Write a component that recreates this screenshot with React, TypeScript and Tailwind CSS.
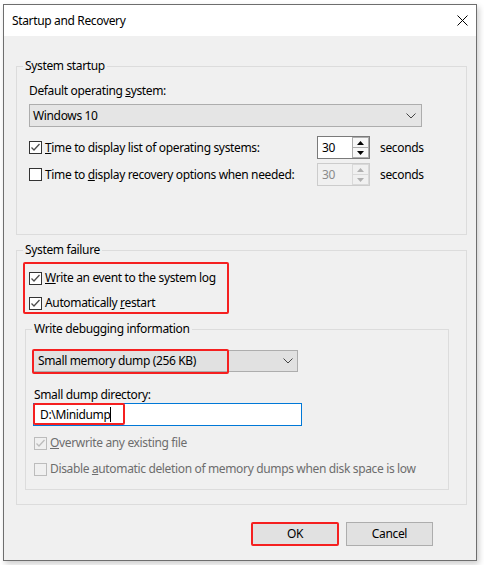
import React from "react";

const Check = ({ checked, disabled }: { checked?: boolean; disabled?: boolean }) => (
  <span
    className={
      disabled
        ? "w-[13px] h-[13px] shrink-0 border border-[#bcbcbc] bg-[#f0f0f0] flex items-center justify-center"
        : "w-[13px] h-[13px] shrink-0 border border-[#333333] bg-white flex items-center justify-center"
    }
  >
    {checked && (
      <svg width="11" height="11" viewBox="0 0 11 11">
        <path d="M1.5 5.5 L4 8 L9.5 2" fill="none" stroke={disabled ? "#bcbcbc" : "#4d4d4d"} strokeWidth="1.3" />
      </svg>
    )}
  </span>
);

const Chevron = () => (
  <svg width="10" height="6" viewBox="0 0 10 6">
    <path d="M0.5 0.5 L5 5 L9.5 0.5" fill="none" stroke="#444" strokeWidth="1" />
  </svg>
);

const Spinner = ({ disabled }: { disabled?: boolean }) => (
  <div
    className={
      disabled
        ? "flex w-[53px] h-[23px] border border-[#cccccc] bg-[#f0f0f0]"
        : "flex w-[53px] h-[23px] border border-[#7a7a7a] bg-white"
    }
  >
    <div className={disabled ? "flex-1 pl-[4px] leading-[21px] text-[#8a8a8a]" : "flex-1 pl-[4px] leading-[21px]"}>30</div>
    <div className="w-[17px] flex flex-col">
      <div className={disabled ? "flex-1 border border-[#d9d9d9] flex items-center justify-center" : "flex-1 border border-[#adadad] bg-[#f7f7f7] flex items-center justify-center"}>
        <svg width="7" height="4" viewBox="0 0 7 4">
          <path d="M0 4 L3.5 0 L7 4 Z" fill={disabled ? "#b0b0b0" : "#000"} />
        </svg>
      </div>
      <div className={disabled ? "flex-1 border border-[#d9d9d9] border-t-0 flex items-center justify-center" : "flex-1 border border-[#adadad] border-t-0 bg-[#f7f7f7] flex items-center justify-center"}>
        <svg width="7" height="4" viewBox="0 0 7 4">
          <path d="M0 0 L3.5 4 L7 0 Z" fill={disabled ? "#b0b0b0" : "#000"} />
        </svg>
      </div>
    </div>
  </div>
);

export default function App() {
  return (
    <div className="w-[484px] h-[565px] bg-white pl-[3px] pt-[4px] font-['Noto_Sans',sans-serif] text-[12px] leading-[16px] tracking-[-0.35px] text-black">
      <div className="w-[474px] h-[557px] border border-[#6e6e6e] bg-[#f0f0f0] flex flex-col shadow-[2px_3px_6px_rgba(0,0,0,0.2)]">
        <div className="h-[31px] bg-white flex items-center justify-between pl-[8px] pr-[8px]">
          <span>Startup and Recovery</span>
          <svg width="11" height="11" viewBox="0 0 11 11">
            <path d="M0.5 0.5 L10.5 10.5 M10.5 0.5 L0.5 10.5" stroke="#000" strokeWidth="1" />
          </svg>
        </div>

        <div className="flex-1 pl-[12px] pr-[9px]">
          <fieldset className="mt-[22px] border border-[#dcdcdc]">
            <legend className="ml-[6px] px-[2px]">System startup</legend>
            <div className="pl-[12px] pt-[9px] pb-[48px]">
              <div>
                Default operating <u>s</u>ystem:
              </div>
              <div className="mt-[5px] w-[393px] h-[23px] border border-[#adadad] bg-[#e5e5e5] flex items-center justify-between pl-[3px] pr-[5px]">
                <span>Windows 10</span>
                <Chevron />
              </div>
              <div className="mt-[9px] flex items-center h-[23px]">
                <div className="w-[288px] flex items-center gap-[3px]">
                  <Check checked />
                  <span>
                    <u>T</u>ime to display list of operating systems:
                  </span>
                </div>
                <Spinner />
                <span className="ml-[10px]">seconds</span>
              </div>
              <div className="mt-[4px] flex items-center h-[23px]">
                <div className="w-[288px] flex items-center gap-[3px]">
                  <Check />
                  <span>
                    Time to <u>d</u>isplay recovery options when needed:
                  </span>
                </div>
                <Spinner disabled />
                <span className="ml-[10px]">seconds</span>
              </div>
            </div>
          </fieldset>

          <fieldset className="mt-[7px] border border-[#dcdcdc] pb-[14px]">
            <legend className="ml-[6px] px-[2px]">System failure</legend>
            <div className="mt-[4px] ml-[6px] w-[206px] h-[52px] border-2 border-[#f52020] rounded-[2px] pl-[4px] pt-[6px] flex flex-col gap-[9px]">
              <div className="flex items-center gap-[3px]">
                <Check checked />
                <span>
                  <u>W</u>rite an event to the system log
                </span>
              </div>
              <div className="flex items-center gap-[3px]">
                <Check checked />
                <span>
                  Automatically <u>r</u>estart
                </span>
              </div>
            </div>

            <fieldset className="mt-[7px] ml-[8px] w-[424px] border border-[#dcdcdc] pb-[12px]">
              <legend className="ml-[6px] px-[2px]">Write debugging information</legend>
              <div className="relative mt-[13px] ml-[7px] w-[265px] h-[22px] border border-[#adadad] bg-[#e1e1e1] flex items-center justify-between pl-[4px] pr-[4px]">
                <span>Small memory dump (256 KB)</span>
                <Chevron />
                <div className="absolute -left-[2px] -top-[2px] w-[197px] h-[25px] border-2 border-[#f52020] rounded-[2px]" />
              </div>
              <div className="mt-[15px] ml-[8px]">Small dump directory:</div>
              <div className="relative ml-[7px] w-[269px] h-[23px] border border-[#0078d7] bg-white flex items-center pl-[6px]">
                <span>D:\Minidump</span>
                <span className="w-[1px] h-[15px] bg-black" />
                <div className="absolute -left-[1px] -top-[1px] w-[92px] h-[22px] border-2 border-[#f52020] rounded-[2px]" />
              </div>
              <div className="mt-[9px] ml-[8px] flex items-center gap-[3px] text-[#6d6d6d]">
                <Check checked disabled />
                <span>
                  <u>O</u>verwrite any existing file
                </span>
              </div>
              <div className="mt-[10px] ml-[8px] flex items-center gap-[3px] text-[#6d6d6d]">
                <Check disabled />
                <span>
                  Disable <u>a</u>utomatic deletion of memory dumps when disk space is low
                </span>
              </div>
            </fieldset>
          </fieldset>

          <div className="mt-[17px] mr-[34px] flex justify-end gap-[7px]">
            <button className="w-[88px] h-[24px] border-2 border-[#f52020] rounded-[2px] bg-[#e1e1e1]">OK</button>
            <button className="w-[87px] h-[24px] border border-[#adadad] bg-[#e1e1e1]">Cancel</button>
          </div>
        </div>
      </div>
    </div>
  );
}
